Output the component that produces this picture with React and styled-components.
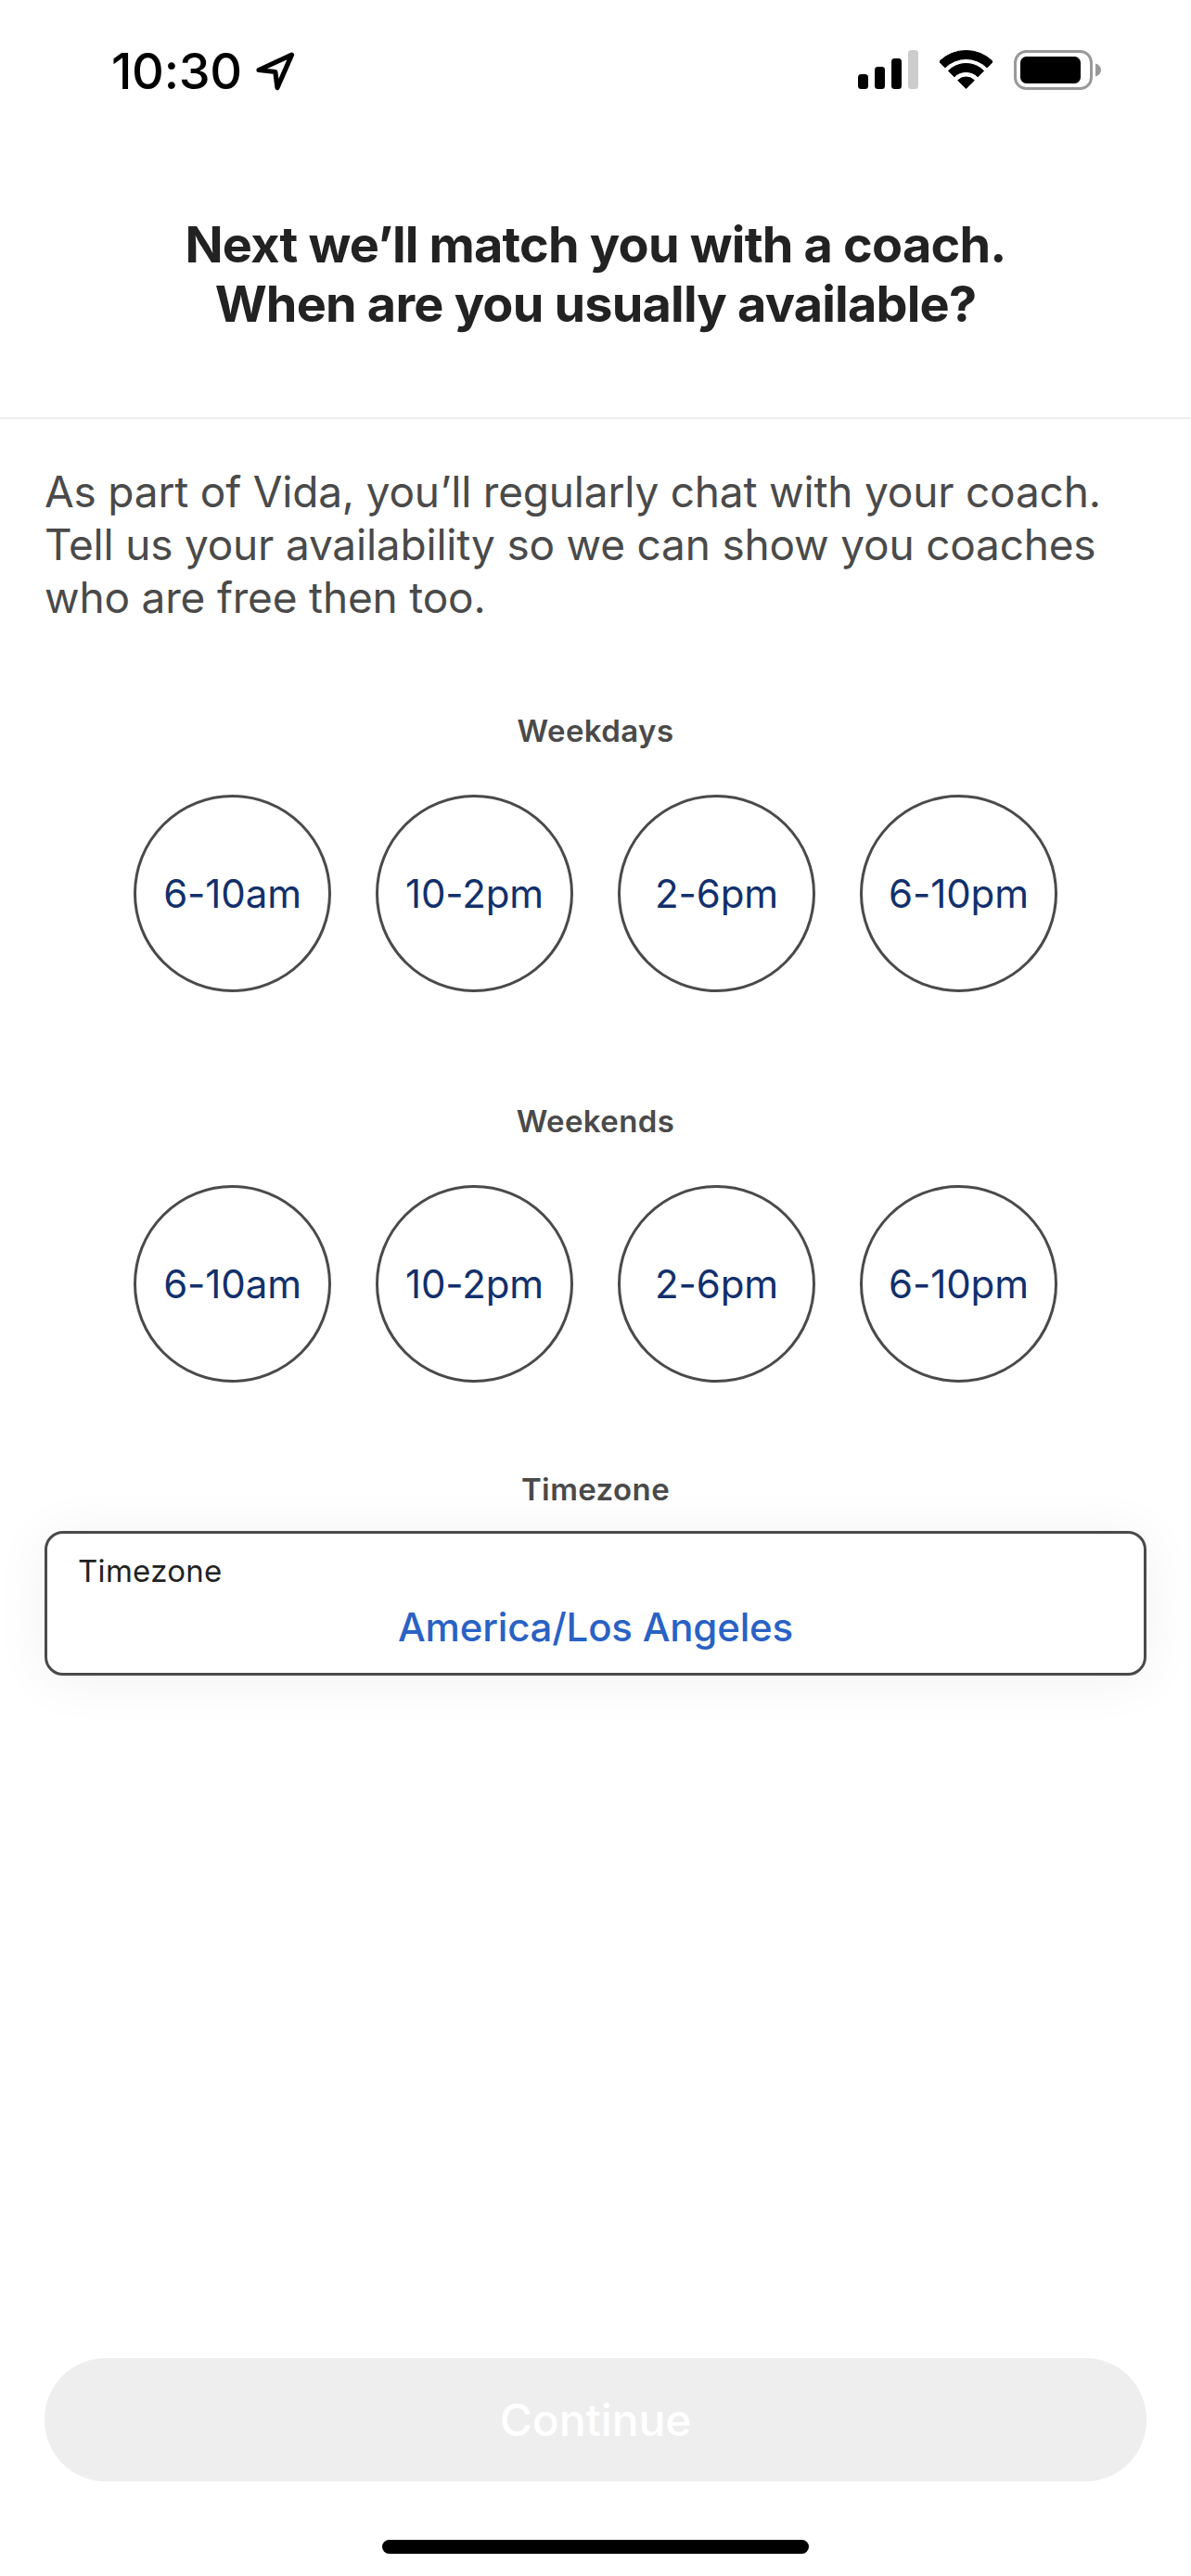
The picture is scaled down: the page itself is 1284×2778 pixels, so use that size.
import styled, { createGlobalStyle } from "styled-components"

const SLOTS = ["6-10am", "10-2pm", "2-6pm", "6-10pm"]

const GlobalStyle = createGlobalStyle`
  html, body {
    margin: 0;
    background: #fff;
  }
  body {
    font-family: Inter, "Liberation Sans", sans-serif;
  }
`

function sector(r, cx = 28.5, cy = 41.5) {
  const d = r * Math.SQRT1_2
  return `L${cx - d} ${cy - d}A${r} ${r} 0 0 1 ${cx + d} ${cy - d}`
}

function band(outer, inner, cx = 28.5, cy = 41.5) {
  const o = outer * Math.SQRT1_2
  const i = inner * Math.SQRT1_2
  return `M${cx - o} ${cy - o}A${outer} ${outer} 0 0 1 ${cx + o} ${cy - o}L${cx + i} ${cy - i}A${inner} ${inner} 0 0 0 ${cx - i} ${cy - i}Z`
}

function LocationArrow() {
  return (
    <svg width="42" height="42" viewBox="0 0 42 42" fill="none">
      <path
        d="M3 19.5 38.5 3.2 23 38.5 20.8 21.5Z"
        stroke="#000"
        strokeWidth="5.2"
        strokeLinejoin="round"
      />
    </svg>
  )
}

function SignalBars() {
  return (
    <svg width="65" height="42" viewBox="0 0 65 42">
      <rect x="0" y="26" width="11" height="16" rx="3.5" fill="#000" />
      <rect x="18" y="18" width="11" height="24" rx="3.5" fill="#000" />
      <rect x="36" y="9" width="11" height="33" rx="3.5" fill="#000" />
      <rect x="54" y="0" width="11" height="42" rx="3.5" fill="#ccc" />
    </svg>
  )
}

function WifiIcon() {
  return (
    <svg width="57" height="42" viewBox="0 0 57 42" fill="#000">
      <path d={band(41, 32)} stroke="#000" strokeWidth="1" strokeLinejoin="round" />
      <path d={band(27, 18)} stroke="#000" strokeWidth="1" strokeLinejoin="round" />
      <path d={`M28.5 41.5${sector(12.5)}Z`} stroke="#000" strokeWidth="1" strokeLinejoin="round" />
    </svg>
  )
}

function BatteryIcon() {
  return (
    <svg width="94" height="43" viewBox="0 0 94 43">
      <rect x="1.5" y="1.5" width="82" height="40" rx="12" fill="none" stroke="#999" strokeWidth="3" />
      <rect x="7" y="7" width="65" height="29" rx="6.5" fill="#000" />
      <path d="M88 14.5C91.5 15.5 94 18.2 94 21.5S91.5 27.5 88 28.5Z" fill="#999" />
    </svg>
  )
}

function SlotGroup({ label, gap }) {
  return (
    <Section $gap={gap}>
      <SectionLabel>{label}</SectionLabel>
      <SlotRow>
        {SLOTS.map((slot) => (
          <Slot key={slot}>{slot}</Slot>
        ))}
      </SlotRow>
    </Section>
  )
}

function App() {
  return (
    <Screen>
      <GlobalStyle />
      <StatusBar>
        <Clock>
          <span>10:30</span>
          <LocationArrow />
        </Clock>
        <StatusIcons>
          <SignalBars />
          <WifiIcon />
          <BatteryIcon />
        </StatusIcons>
      </StatusBar>
      <Header>
        <h1>
          Next we’ll match you with a coach.
          <br />
          When are you usually available?
        </h1>
      </Header>
      <Intro>
        As part of Vida, you’ll regularly chat with your coach. Tell us your
        availability so we can show you coaches who are free then too.
      </Intro>
      <SlotGroup label="Weekdays" gap={95} />
      <SlotGroup label="Weekends" gap={119} />
      <TimezoneSection>
        <SectionLabel>Timezone</SectionLabel>
        <TimezoneField>
          <FieldLabel>Timezone</FieldLabel>
          <FieldValue>America/Los Angeles</FieldValue>
        </TimezoneField>
      </TimezoneSection>
      <Footer>
        <ContinueButton type="button">Continue</ContinueButton>
        <HomeIndicator />
      </Footer>
    </Screen>
  )
}

export default App

const Screen = styled.div`
  width: 1284px;
  height: 2778px;
  display: flex;
  flex-direction: column;
  overflow: hidden;
  background: #fff;
`
const StatusBar = styled.div`
  height: 100px;
  box-sizing: border-box;
  padding: 54px 97px 0 120px;
  display: flex;
  align-items: flex-start;
  justify-content: space-between;
`
const Clock = styled.div`
  display: flex;
  align-items: center;
  gap: 15px;
  height: 45px;
  color: #000;
  font-size: 54px;
  font-weight: 500;
  letter-spacing: -0.3px;
`
const StatusIcons = styled.div`
  display: flex;
  align-items: flex-start;
  gap: 23px;
`
const Header = styled.div`
  height: 350px;
  border-bottom: 2px solid #eeeeee;
  display: flex;
  align-items: flex-start;
  justify-content: center;

  h1 {
    margin: 132px 0 0;
    color: #222222;
    font-size: 54px;
    line-height: 64px;
    font-weight: 700;
    letter-spacing: -0.8px;
    text-align: center;
  }
`
const Intro = styled.p`
  margin: 50px 48px 0;
  color: #4a4a4a;
  font-size: 46px;
  line-height: 57px;
  font-weight: 400;
  letter-spacing: -0.2px;
`
const Section = styled.div`
  margin-top: ${(p) => p.$gap}px;
  display: flex;
  flex-direction: column;
  align-items: center;
`
const SectionLabel = styled.div`
  color: #4a4a4a;
  font-size: 33px;
  line-height: 40px;
  font-weight: 600;
  letter-spacing: 0.4px;
  text-align: center;
`
const SlotRow = styled.div`
  margin-top: 49px;
  display: flex;
  justify-content: center;
  gap: 48px;
`
const Slot = styled.div`
  width: 213px;
  height: 213px;
  box-sizing: border-box;
  border: 3px solid #4a4a4a;
  border-radius: 50%;
  display: flex;
  align-items: center;
  justify-content: center;
  color: #12306c;
  font-size: 42px;
  letter-spacing: -0.1px;
`
const TimezoneSection = styled.div`
  margin: 95px 48px 0;
  display: flex;
  flex-direction: column;
`
const TimezoneField = styled.div`
  margin-top: 25px;
  height: 156px;
  box-sizing: border-box;
  padding: 20px 33px 0;
  border: 3px solid #4a4a4a;
  border-radius: 20px;
  background: #fff;
  box-shadow: 0 4px 60px rgba(0, 0, 0, 0.06);
`
const FieldLabel = styled.div`
  color: #222222;
  font-size: 33px;
  line-height: 40px;
  letter-spacing: 0.3px;
`
const FieldValue = styled.div`
  margin-top: 15px;
  color: #2962c4;
  font-size: 42px;
  line-height: 52px;
  font-weight: 500;
  letter-spacing: -0.2px;
  text-align: center;
`
const Footer = styled.div`
  margin-top: auto;
  padding: 0 48px 24px;
  display: flex;
  flex-direction: column;
  align-items: center;
`
const ContinueButton = styled.button`
  width: 100%;
  height: 133px;
  padding: 0;
  border: none;
  border-radius: 66px;
  background: #eeeeee;
  color: #ffffff;
  font-family: inherit;
  font-size: 48px;
  font-weight: 500;
  letter-spacing: -0.1px;
`
const HomeIndicator = styled.div`
  margin-top: 63px;
  width: 460px;
  height: 15px;
  border-radius: 8px;
  background: #000;
`
